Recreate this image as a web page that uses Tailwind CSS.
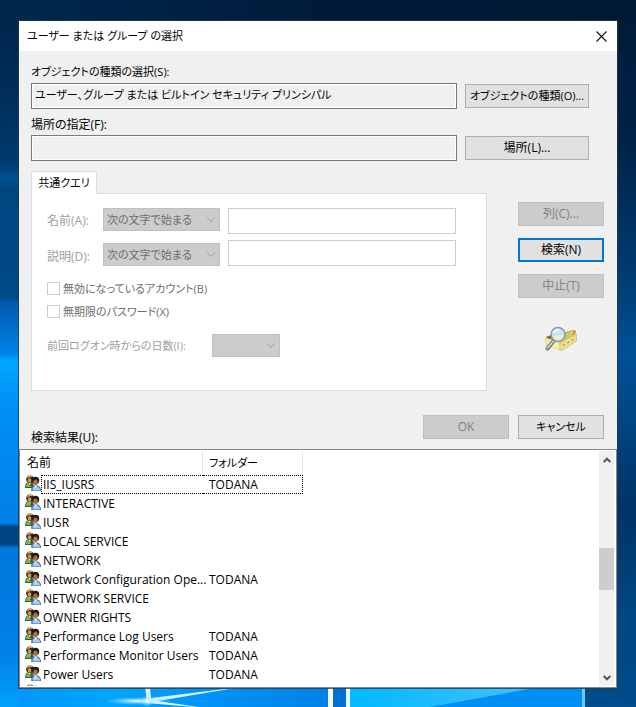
<!DOCTYPE html>
<html lang="ja">
<head>
  <meta charset="UTF-8">
  <meta name="viewport" content="width=device-width, initial-scale=1.0">
  <title>ユーザー または グループ の選択</title>
  <script src="https://cdn.jsdelivr.net/npm/@tailwindcss/browser@4"></script>
</head>
<body class="relative min-h-screen bg-[#003a70] px-[19px] pt-[21px] pb-[19px] font-['Open_Sans','Noto_Sans_CJK_JP',sans-serif] text-[12px] leading-[18px] text-black [font-feature-settings:'palt']">

  <!-- wallpaper -->
  <svg class="absolute inset-0 w-full h-full" viewBox="0 0 636 707" preserveAspectRatio="none" aria-hidden="true">
    <defs>
      <linearGradient id="left" x1="0" y1="0" x2="0" y2="1">
        <stop offset="0" stop-color="#00254a"/>
        <stop offset=".12" stop-color="#002c57"/>
        <stop offset=".23" stop-color="#003a6e"/>
        <stop offset=".25" stop-color="#00508f"/>
        <stop offset=".27" stop-color="#004681"/>
        <stop offset=".42" stop-color="#004a88"/>
        <stop offset=".43" stop-color="#005bb0"/>
        <stop offset=".5" stop-color="#0083e8"/>
        <stop offset=".51" stop-color="#00a8ff"/>
        <stop offset=".57" stop-color="#0090f6"/>
        <stop offset=".74" stop-color="#0080e6"/>
        <stop offset=".745" stop-color="#004584"/>
        <stop offset=".77" stop-color="#00427f"/>
        <stop offset=".775" stop-color="#0078dc"/>
        <stop offset=".92" stop-color="#0080e6"/>
        <stop offset="1" stop-color="#00a0fc"/>
      </linearGradient>
      <linearGradient id="right" x1="0" y1="0" x2="0" y2="1">
        <stop offset="0" stop-color="#001a36"/>
        <stop offset=".2" stop-color="#002247"/>
        <stop offset=".4" stop-color="#003d74"/>
        <stop offset=".5" stop-color="#005096"/>
        <stop offset=".6" stop-color="#004582"/>
        <stop offset=".72" stop-color="#003365"/>
        <stop offset=".85" stop-color="#004580"/>
        <stop offset="1" stop-color="#004c8c"/>
      </linearGradient>
      <linearGradient id="top" x1="0" y1="0" x2="1" y2="0">
        <stop offset="0" stop-color="#00284f"/>
        <stop offset=".5" stop-color="#001b3a"/>
        <stop offset="1" stop-color="#001a34"/>
      </linearGradient>
      <linearGradient id="floor" x1="0" y1="0" x2="1" y2="0">
        <stop offset="0" stop-color="#0098fa"/>
        <stop offset=".3" stop-color="#00a5ff"/>
        <stop offset=".6" stop-color="#0094f8"/>
        <stop offset="1" stop-color="#0082e6"/>
      </linearGradient>
      <linearGradient id="pane" x1="0" y1="0" x2="1" y2="0">
        <stop offset="0" stop-color="#00baff"/>
        <stop offset="1" stop-color="#45c0ff"/>
      </linearGradient>
      <radialGradient id="flare">
        <stop offset="0" stop-color="#fff"/>
        <stop offset="1" stop-color="#7fd6ff" stop-opacity="0"/>
      </radialGradient>
    </defs>
    <path fill="url(#left)" d="M0 0h40v707H0z"/>
    <path fill="url(#right)" d="M585 0h51v707h-51z"/>
    <path fill="url(#top)" d="M0 0h636v22H0z"/>
    <path fill="url(#floor)" d="M19 686h309v21H19z"/>
    <path fill="#0071d2" d="M333 686h13v21h-13z"/>
    <path fill="#0090f5" d="M350 686h233v21H350z"/>
    <path fill="url(#pane)" d="M350 686h195L430 707h-80z"/>
    <path fill="#f2fcff" d="M328 686h5v21h-5zM346 686h4v21h-4z"/>
    <path fill="#63cdff" d="M582 686h3v21h-3z"/>
    <path fill="#d8f3ff" d="M145 686h5l1 12 90-11-83 14 47 7-58-5z"/>
    <ellipse fill="url(#flare)" cx="138" cy="701" rx="34" ry="4"/>
    <ellipse fill="url(#flare)" cx="147" cy="701" rx="7" ry="6"/>
  </svg>

  <!-- people icon shared by the result rows -->
  <svg class="hidden" aria-hidden="true">
    <symbol id="group" viewBox="0 0 16 16">
      <path fill="#33602a" d="M0 13c0-4 1.500-6 4.500-6S9 9 9 13z"/>
      <path fill="#7fb556" d="M1 12c0-2.500 1-4 2.500-4l1.500 2.500L6.500 12z"/>
      <path fill="#fff" d="M4 8h1.600l-.6 2.500z"/>
      <circle fill="#3a2a16" cx="5" cy="4.200" r="3.800"/>
      <ellipse fill="#c8966a" cx="4.500" cy="5.500" rx="1.800" ry="2.300"/>
      <path fill="#d3b554" d="M2 3.500C2.300 1.200 4 .4 5.300.5 6.500.6 7 1.200 7.200 2 5.500 1.800 4 2.300 2 3.500z"/>
      <circle fill="#241a12" cx="10.500" cy="5.500" r="3.700"/>
      <ellipse fill="#a87246" cx="10.500" cy="7.300" rx="2.200" ry="2.800"/>
      <path fill="#4a6c9e" d="M6.300 16c-.3-4 1.200-5.700 4.200-5.700S16 12 16 16z"/>
      <path fill="#a6cbf2" d="M7.500 15.500c0-3 1-4.300 3-4.300s4.500 1.300 4.700 4.300z"/>
      <path fill="#fff" d="M9.300 10.500h2.400l-1 2.700z"/>
    </symbol>
  </svg>

  <form class="relative bg-[#f0f0f0] ring-1 ring-[#24384d]/80" onsubmit="return false">
    <header class="flex h-[30px] items-center justify-between bg-white pl-2 pr-[10px]">
      <h1 class="text-[11px]">ユーザー または グループ の選択</h1>
      <button type="button" aria-label="閉じる">
        <svg class="size-[11px]" viewBox="0 0 11 11" fill="none" stroke="#111" stroke-width="1.1"><path d="M.5.500l10 10M10.500.500l-10 10"/></svg>
      </button>
    </header>

    <div class="pt-3 pb-[2px] pl-3 pr-[13px]">
      <div class="pr-[15px]">
        <label for="types" class="mb-[2px] block text-[11px]">オブジェクトの種類の選択(S):</label>
        <div class="mb-[7px] flex items-center gap-2">
          <input id="types" readonly value="ユーザー、グループ または ビルトイン セキュリティ プリンシパル" class="h-[26px] min-w-0 flex-1 border border-[#7a7a7a] bg-[#f0f0f0] px-[3px] pb-1 text-[11px] shadow-[inset_0_0_0_1px_#fff] outline-none">
          <button type="button" class="h-6 w-[124px] border border-[#adadad] bg-[#e1e1e1] text-[11px] whitespace-nowrap">オブジェクトの種類(O)...</button>
        </div>
        <label for="place" class="mb-px block">場所の指定(F):</label>
        <div class="flex items-center gap-2">
          <input id="place" readonly class="h-[26px] min-w-0 flex-1 border border-[#7a7a7a] bg-[#f0f0f0] px-[3px] pb-1 shadow-[inset_0_0_0_1px_#fff] outline-none">
          <button type="button" class="h-6 w-[124px] border border-[#adadad] bg-[#e1e1e1]">場所(L)...</button>
        </div>
      </div>

      <div class="mt-[10px] flex gap-[31px]">
        <section class="flex-1">
          <button type="button" role="tab" class="relative -mb-px block h-[23px] w-[66px] border border-b-0 border-[#dcdcdc] bg-white text-[11px]">共通クエリ</button>
          <div class="border border-[#dcdcdc] bg-white pt-[14px] pb-[33px] pl-[15px] pr-[30px] text-[#6d6d6d]">
            <div class="mb-[6px] flex items-start">
              <label for="name" class="w-14 self-center text-[#a0a0a0]">名前(A):</label>
              <div class="relative mr-2">
                <select disabled aria-label="名前の条件" class="block h-[23px] w-[117px] appearance-none border border-[#bfbfbf] bg-[#ccc] pl-[3px] text-[11px] text-[#6d6d6d] opacity-100"><option>次の文字で始まる</option></select>
                <svg class="absolute top-[9px] right-1 h-[6px] w-[10px]" viewBox="0 0 10 6" fill="none" stroke="#9a9a9a"><path d="M1 .500l4 4 4-4"/></svg>
              </div>
              <input id="name" disabled class="h-[26px] min-w-0 flex-1 border border-[#ccc] bg-white px-1">
            </div>
            <div class="mb-[11px] flex items-end">
              <label for="desc" class="w-14 text-[#a0a0a0]">説明(D):</label>
              <div class="relative mr-2">
                <select disabled aria-label="説明の条件" class="block h-[23px] w-[117px] appearance-none border border-[#bfbfbf] bg-[#ccc] pl-[3px] text-[11px] text-[#6d6d6d] opacity-100"><option>次の文字で始まる</option></select>
                <svg class="absolute top-[9px] right-1 h-[6px] w-[10px]" viewBox="0 0 10 6" fill="none" stroke="#9a9a9a"><path d="M1 .500l4 4 4-4"/></svg>
              </div>
              <input id="desc" disabled class="h-[26px] min-w-0 flex-1 border border-[#ccc] bg-white px-1">
            </div>
            <label class="flex h-[23px] items-center gap-[3px] text-[11px]"><input type="checkbox" disabled class="size-[13px] appearance-none border border-[#ccc] bg-white">無効になっているアカウント(B)</label>
            <label class="flex h-[23px] items-center gap-[3px] text-[11px]"><input type="checkbox" disabled class="size-[13px] appearance-none border border-[#ccc] bg-white">無期限のパスワード(X)</label>
            <div class="mt-[11px] flex items-center">
              <label for="days" class="w-[165px] text-[11px] text-[#a0a0a0]">前回ログオン時からの日数(I):</label>
              <div class="relative">
                <select id="days" disabled class="block h-[23px] w-[68px] appearance-none border border-[#bfbfbf] bg-[#ccc] opacity-100"></select>
                <svg class="absolute top-[9px] right-1 h-[6px] w-[10px]" viewBox="0 0 10 6" fill="none" stroke="#9a9a9a"><path d="M1 .500l4 4 4-4"/></svg>
              </div>
            </div>
          </div>
        </section>

        <div class="flex w-[86px] flex-col gap-[12px] pt-[31px]">
          <button type="button" disabled class="h-6 border border-[#bfbfbf] bg-[#ccc] text-[#838383]">列(C)...</button>
          <button type="submit" class="h-6 border-2 border-[#0078d7] bg-[#e1e1e1]">検索(N)</button>
          <button type="button" disabled class="h-6 border border-[#bfbfbf] bg-[#ccc] text-[#838383]">中止(T)</button>
          <svg class="mt-4 ml-[26px] h-[26px] w-[34px]" viewBox="0 0 34 26" aria-hidden="true">
            <path fill="#c98d16" d="M15 8l15-4 2 1-1 3-12 6z"/>
            <path fill="#f5dc74" d="M16 9l14-4-1 2-12 5z"/>
            <path fill="#cfc27a" d="M2 11l8-3 16-1 6 2-15 9-15-4z"/>
            <path fill="#6f6632" d="M2 11l6-2 2 3-4 1z"/>
            <path fill="#f6efa8" stroke="#d5c97a" stroke-width=".6" d="M1.500 12l14.500 4.500v7.500L2 19.500z"/>
            <path fill="#ebe08c" stroke="#c0b35a" stroke-width=".6" d="M16 16.500L32.500 8v7L18 24.500l-2-.5z"/>
            <path stroke="#7d7231" stroke-width="1" stroke-dasharray="2 3" d="M19 19.500l11-6.500"/>
            <path stroke="#71767e" stroke-width="4" stroke-linecap="round" d="M3.500 22.500l6.500-8"/>
            <path stroke="#d5d9df" stroke-width="1.600" stroke-linecap="round" d="M3.500 22l6.500-7.500"/>
            <circle fill="#c4e2f6" fill-opacity=".92" stroke="#8b98a8" stroke-width="1.400" cx="14" cy="8.500" r="7"/>
            <path fill="#f0efc4" d="M9 11c3-2 7-2.500 10.500-2-.5 3-3 5-5.500 5-2 0-4-1-5-3z"/>
            <path fill="#fff" fill-opacity=".8" d="M8.500 7.500C9.500 4 12 3 15.500 3.300 14 6 11 6 8.500 7.500z"/>
          </svg>
        </div>
      </div>

      <div class="mt-6 flex h-8 items-start gap-[9px]">
        <h2 class="flex-1 self-end">検索結果(U):</h2>
        <button type="button" disabled class="h-6 w-[86px] border border-[#bfbfbf] bg-[#ccc] text-[#838383]">OK</button>
        <button type="button" class="h-6 w-[86px] border border-[#adadad] bg-[#e1e1e1] text-[11px]">キャンセル</button>
      </div>
    </div>

    <div class="flex h-[239px] justify-between overflow-hidden border border-[#828790] bg-white pt-px pr-[2px] pb-px">
      <div class="overflow-hidden">
        <table class="w-[283px] table-fixed border-separate border-spacing-0">
          <thead>
            <tr class="h-6 text-left">
              <th class="w-[183px] border-r border-[#e5e5e5] p-0 pl-[7px] font-normal">名前</th>
              <th class="w-[100px] border-r border-[#e5e5e5] p-0 pl-[6px] text-[11px] font-normal">フォルダー</th>
            </tr>
          </thead>
          <tbody id="results"></tbody>
        </table>
      </div>
      <div class="flex w-[15px] flex-col items-center bg-[#f0f0f0]">
        <button type="button" aria-label="上へ" class="flex h-[17px] w-full items-center justify-center">
          <svg class="h-[6px] w-2" viewBox="0 0 8 6" fill="none" stroke="#555" stroke-width="2"><path d="M.700 5L4 1.700 7.300 5"/></svg>
        </button>
        <div class="mt-20 h-[42px] w-full bg-[#cdcdcd]"></div>
        <button type="button" aria-label="下へ" class="mt-auto flex h-[17px] w-full items-center justify-center">
          <svg class="h-[6px] w-2" viewBox="0 0 8 6" fill="none" stroke="#555" stroke-width="2"><path d="M.700 1L4 4.300 7.300 1"/></svg>
        </button>
      </div>
    </div>
  </form>

  <script>
    const rows = [
      ['IIS_IUSRS', 'TODANA'],
      ['INTERACTIVE', ''],
      ['IUSR', ''],
      ['LOCAL SERVICE', ''],
      ['NETWORK', ''],
      ['Network Configuration Ope...', 'TODANA'],
      ['NETWORK SERVICE', ''],
      ['OWNER RIGHTS', ''],
      ['Performance Log Users', 'TODANA'],
      ['Performance Monitor Users', 'TODANA'],
      ['Power Users', 'TODANA'],
      ['', '']
    ];

    document.getElementById('results').innerHTML = rows.map(([name, folder], i) => {
      const line = i === 0 ? 'border-black' : 'border-transparent';
      return `<tr class="h-[19px]">
        <td class="p-0 pl-[5px]"><div class="flex">
          <svg class="size-4 shrink-0"><use href="#group"/></svg>
          <span class="h-[19px] flex-1 border border-r-0 border-dotted pl-px leading-[17px] whitespace-nowrap ${line}">${name}</span>
        </div></td>
        <td class="border border-l-0 border-dotted p-0 pl-[6px] leading-[17px] ${line}">${folder}</td>
      </tr>`;
    }).join('');
  </script>
</body>
</html>
